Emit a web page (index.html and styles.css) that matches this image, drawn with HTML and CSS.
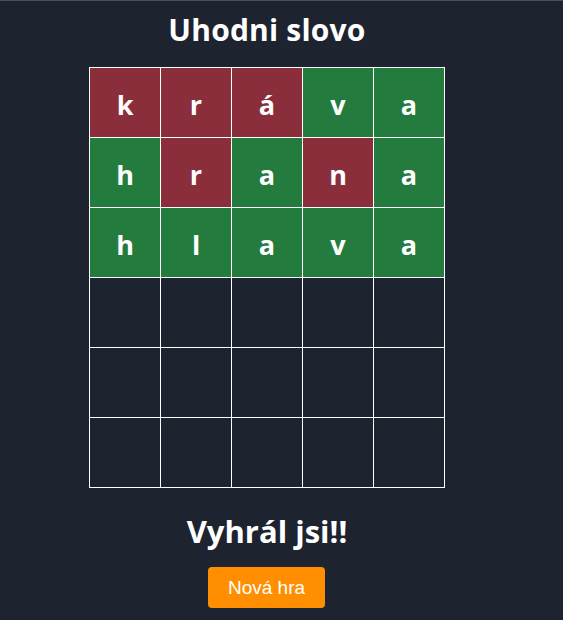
FILE: index.html
```html
<!DOCTYPE html>
<html lang="cs">
<head>
<meta charset="utf-8">
<title>Uhodni slovo</title>
<link rel="stylesheet" href="styles.css">
</head>
<body>
<main class="app">
  <h1 class="title">Uhodni slovo</h1>
  <div class="board">
    <div class="cell miss">k</div><div class="cell miss">r</div><div class="cell miss">á</div><div class="cell hit">v</div><div class="cell hit">a</div>
    <div class="cell hit">h</div><div class="cell miss">r</div><div class="cell hit">a</div><div class="cell miss">n</div><div class="cell hit">a</div>
    <div class="cell hit">h</div><div class="cell hit">l</div><div class="cell hit">a</div><div class="cell hit">v</div><div class="cell hit">a</div>
    <div class="cell"></div><div class="cell"></div><div class="cell"></div><div class="cell"></div><div class="cell"></div>
    <div class="cell"></div><div class="cell"></div><div class="cell"></div><div class="cell"></div><div class="cell"></div>
    <div class="cell"></div><div class="cell"></div><div class="cell"></div><div class="cell"></div><div class="cell"></div>
  </div>
  <h2 class="result">Vyhrál jsi!!</h2>
  <button class="new-game">Nová hra</button>
</main>
</body>
</html>
```

FILE: styles.css
```css
html, body {
  margin: 0;
  padding: 0;
  background: #1e2330;
  height: 100%;
}
body {
  border-top: 1px solid #4c4f57;
  box-sizing: border-box;
  font-family: "Open Sans", "Noto Sans", sans-serif;
  color: #ffffff;
}
.app {
  width: 534px;
  display: flex;
  flex-direction: column;
  align-items: center;
  padding-top: 12px;
}
.title {
  margin: 0;
  font-size: 30px;
  line-height: 34px;
  font-weight: 700;
  letter-spacing: 0.2px;
}
.board {
  margin-top: 20px;
  display: grid;
  grid-template-columns: repeat(5, 70px);
  grid-auto-rows: 69px;
  gap: 1px;
  padding: 1px;
  background: #ffffff;
}
.cell {
  background: #1e2330;
  display: flex;
  align-items: center;
  justify-content: center;
  font-size: 27px;
  font-weight: 700;
  padding-top: 4px;
  box-sizing: border-box;
}
.cell.miss { background: #8a2e3c; }
.cell.hit { background: #237b3e; }
.result {
  margin: 26px 0 0;
  font-size: 31px;
  line-height: 34px;
  font-weight: 700;
}
.new-game {
  margin-top: 19px;
  margin-right: 1px;
  width: 117px;
  height: 41px;
  border: none;
  border-radius: 4px;
  background: #ff8f00;
  color: #ffffff;
  font-family: "Liberation Sans", Arial, sans-serif;
  font-size: 19px;
  padding: 0;
}
```
